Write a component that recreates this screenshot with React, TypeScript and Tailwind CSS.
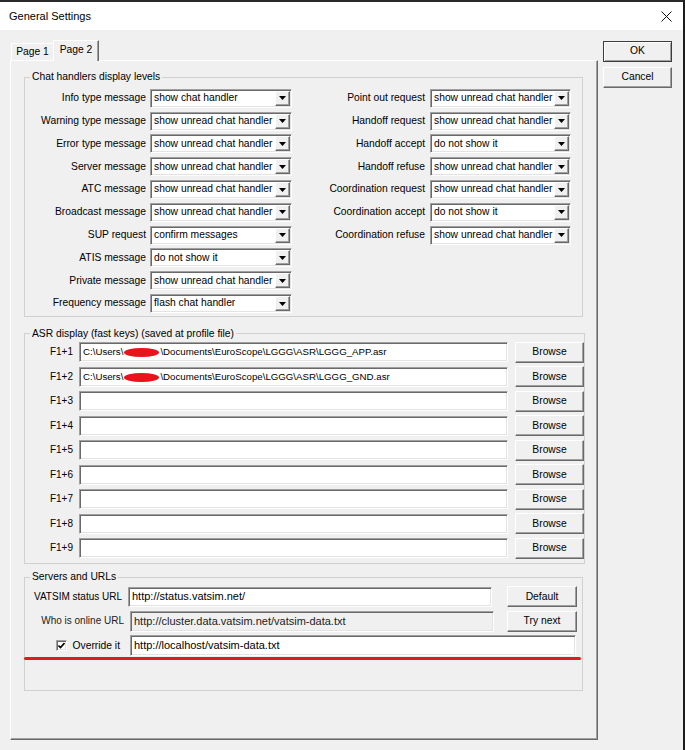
import React from "react";

const sunken =
  "border border-t-[#a0a0a0] border-l-[#a0a0a0] border-r-white border-b-white shadow-[inset_1px_1px_0_#696969,inset_-1px_-1px_0_#e3e3e3]";
const raised =
  "border border-t-white border-l-white border-r-[#696969] border-b-[#696969] shadow-[inset_-1px_-1px_0_#a0a0a0]";

function Combo({ value }: { value: string }) {
  return (
    <div className={`flex h-[19px] bg-white p-[1px] ${sunken}`}>
      <div className="flex flex-1 items-center overflow-hidden whitespace-nowrap pl-[2px] text-[10.3px] leading-none">
        {value}
      </div>
      <div className={`flex h-full w-[15px] items-center justify-center bg-[#f0f0f0] ${raised}`}>
        <svg width="7" height="4" viewBox="0 0 7 4">
          <polygon points="0,0 7,0 3.5,4" fill="#000" />
        </svg>
      </div>
    </div>
  );
}

function Btn({ label, className = "" }: { label: string; className?: string }) {
  return (
    <div
      className={`flex items-center justify-center bg-[#f0f0f0] text-[10.3px] leading-none ${raised} ${className}`}
    >
      {label}
    </div>
  );
}

function Group({
  title,
  className = "",
  children,
}: {
  title: string;
  className?: string;
  children: React.ReactNode;
}) {
  return (
    <fieldset className={`border border-[#d0d0d0] ${className}`}>
      <legend className="ml-[5px] px-[2px] text-[10.3px] leading-[12px]">{title}</legend>
      {children}
    </fieldset>
  );
}

const leftRows: [string, string][] = [
  ["Info type message", "show chat handler"],
  ["Warning type message", "show unread chat handler"],
  ["Error type message", "show unread chat handler"],
  ["Server message", "show unread chat handler"],
  ["ATC message", "show unread chat handler"],
  ["Broadcast message", "show unread chat handler"],
  ["SUP request", "confirm messages"],
  ["ATIS message", "do not show it"],
  ["Private message", "show unread chat handler"],
  ["Frequency message", "flash chat handler"],
];

const rightRows: [string, string][] = [
  ["Point out request", "show unread chat handler"],
  ["Handoff request", "show unread chat handler"],
  ["Handoff accept", "do not show it"],
  ["Handoff refuse", "show unread chat handler"],
  ["Coordination request", "show unread chat handler"],
  ["Coordination accept", "do not show it"],
  ["Coordination refuse", "show unread chat handler"],
];

function Blob() {
  return (
    <span className="relative mx-[1px] inline-block h-[9px] w-[35px] rounded-[50%] bg-[#e8131b] align-middle" />
  );
}

function AsrPath({ file }: { file: string }) {
  return (
    <span className="whitespace-nowrap">
      C:\Users\
      <Blob />
      \Documents\EuroScope\LGGG\ASR\{file}
    </span>
  );
}

export default function App() {
  const asr: React.ReactNode[] = [
    <AsrPath file="LGGG_APP.asr" />,
    <AsrPath file="LGGG_GND.asr" />,
    null,
    null,
    null,
    null,
    null,
    null,
    null,
  ];
  return (
    <div className="flex h-[750px] w-[685px] flex-col overflow-hidden border-t-2 border-r-2 border-t-[#2a2a2a] border-r-[#1c1c1c] bg-[#f0f0f0] font-['Liberation_Sans',Arial,sans-serif] text-black">
      {/* title bar */}
      <div className="flex h-[28px] shrink-0 items-center justify-between bg-white pl-[9px] pr-[10px]">
        <span className="text-[11px] leading-none">General Settings</span>
        <svg width="11" height="11" viewBox="0 0 11 11" className="mr-[1px]">
          <line x1="0.5" y1="0.5" x2="10.5" y2="10.5" stroke="#111" strokeWidth="1" />
          <line x1="10.5" y1="0.5" x2="0.5" y2="10.5" stroke="#111" strokeWidth="1" />
        </svg>
      </div>

      {/* body */}
      <div className="flex flex-1 pt-[10px]">
        {/* tabs + panel */}
        <div className="ml-[10px] flex w-[588px] flex-col">
          <div className="flex h-[20px] items-end pl-[1px] text-[10.3px] leading-none">
            <div className="flex h-[17px] w-[42px] items-center justify-center border-l border-t border-white">
              Page 1
            </div>
            <div className="relative z-10 -mb-[1px] flex h-[21px] w-[46px] items-center justify-center border-l border-t border-r border-l-white border-t-white border-r-[#696969] bg-[#f0f0f0] pb-[2px] shadow-[inset_-1px_0_0_#a0a0a0]">
              Page 2
            </div>
          </div>

          <div className="relative flex h-[680px] flex-col border border-l-white border-t-white border-r-[#696969] border-b-[#696969] pl-[13px] pr-[14px] shadow-[inset_-1px_-1px_0_#a0a0a0]">
            {/* Chat handlers */}
            <Group title="Chat handlers display levels" className="mt-[10px] pb-[1px]">
              <div className="flex pt-[4px]">
                <div className="grid grid-cols-[121px_142px] auto-rows-[22.8px] items-center gap-x-[4px]">
                  {leftRows.map(([l, v]) => (
                    <React.Fragment key={l}>
                      <div className="whitespace-nowrap text-right text-[10.3px] leading-none">{l}</div>
                      <Combo value={v} />
                    </React.Fragment>
                  ))}
                </div>
                <div className="grid grid-cols-[133px_141px] auto-rows-[22.8px] items-center gap-x-[5px] self-start">
                  {rightRows.map(([l, v]) => (
                    <React.Fragment key={l}>
                      <div className="whitespace-nowrap text-right text-[10.3px] leading-none">{l}</div>
                      <Combo value={v} />
                    </React.Fragment>
                  ))}
                </div>
              </div>
            </Group>

            {/* ASR */}
            <Group title="ASR display (fast keys) (saved at profile file)" className="mt-[11px] pb-[3px]">
              <div className="flex flex-col">
                {asr.map((content, i) => (
                  <div key={i} className="flex h-[24.5px] items-center">
                    <div className="w-[54px] shrink-0 pr-[6px] text-right text-[10px] leading-none">
                      F1+{i + 1}
                    </div>
                    <div
                      className={`flex h-[20px] w-[429px] shrink-0 items-center overflow-hidden bg-white pl-[3px] text-[9.7px] leading-none ${sunken}`}
                    >
                      {content}
                    </div>
                    <Btn label="Browse" className="ml-[7px] h-[21px] w-[69px] shrink-0" />
                  </div>
                ))}
              </div>
            </Group>

            {/* Servers */}
            <Group title="Servers and URLs" className="mt-[7px] pb-[32px]">
              <div className="flex flex-col pt-[1px]">
                <div className="flex h-[24.5px] items-center">
                  <div className="w-[103px] shrink-0 pr-[6px] text-right text-[10px] leading-none">
                    VATSIM status URL
                  </div>
                  <div
                    className={`flex h-[20px] w-[364px] shrink-0 items-center bg-white pl-[3px] text-[11px] leading-none ${sunken}`}
                  >
                    http://status.vatsim.net/
                  </div>
                  <Btn label="Default" className="ml-[15px] h-[21px] w-[70px] shrink-0" />
                </div>
                <div className="flex h-[24.5px] items-center">
                  <div className="w-[103px] shrink-0 pr-[4px] text-right text-[10px] leading-none text-[#222]">
                    Who is online URL
                  </div>
                  <div
                    className={`ml-[2px] flex h-[21px] w-[364px] shrink-0 items-center bg-[#f0f0f0] pl-[3px] text-[11px] leading-none text-[#222] ${sunken}`}
                  >
                    http://cluster.data.vatsim.net/vatsim-data.txt
                  </div>
                  <Btn label="Try next" className="ml-[13px] h-[21px] w-[70px] shrink-0" />
                </div>
                <div className="flex h-[24.5px] items-center">
                  <div className="flex w-[103px] shrink-0 items-center justify-end gap-[6px] pr-[8px]">
                    <div className={`flex h-[11px] w-[11px] items-center justify-center bg-white ${sunken}`}>
                      <svg width="7" height="7" viewBox="0 0 7 7">
                        <polyline points="0.5,3.5 2.5,5.5 6.5,1" fill="none" stroke="#000" strokeWidth="1.6" />
                      </svg>
                    </div>
                    <span className="text-[10.3px] leading-none">Override it</span>
                  </div>
                  <div
                    className={`ml-[2px] flex h-[21px] w-[446px] shrink-0 items-center bg-white pl-[3px] text-[11px] leading-none ${sunken}`}
                  >
                    http://localhost/vatsim-data.txt
                  </div>
                </div>
              </div>
            </Group>

            {/* red annotation line */}
            <div className="absolute left-[13px] top-[596px] h-[3px] w-[557px] rounded-full bg-[#e3191f]" />
          </div>
        </div>

        {/* buttons */}
        <div className="ml-[5px] flex w-[69px] flex-col">
          <div className="mt-[1px] flex h-[21px] items-center justify-center border border-[#3c3c3c] bg-[#f0f0f0] text-[10.3px] leading-none shadow-[inset_1px_1px_0_white,inset_-1px_-1px_0_#a0a0a0]">
            OK
          </div>
          <Btn label="Cancel" className="mt-[5px] h-[21px]" />
        </div>
      </div>
    </div>
  );
}
